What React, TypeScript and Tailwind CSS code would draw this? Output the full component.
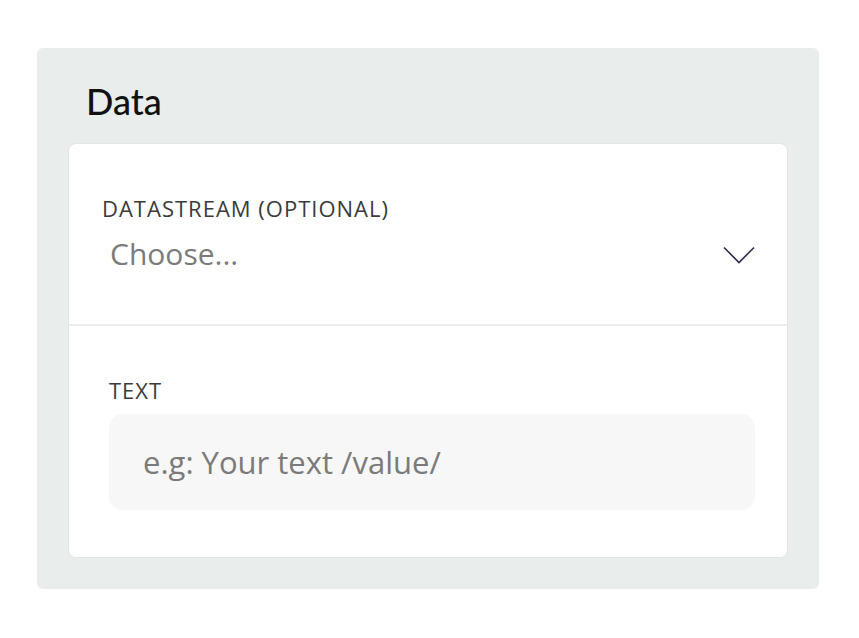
import React from "react";

export default function App() {
  return (
    <div className="w-[859px] h-[638px] bg-white pt-[48px] pl-[37px]">
      <div className="w-[782px] h-[541px] bg-[#e9eeed] rounded-[6px] px-[31px] pb-[31px] flex flex-col">
        <div
          className="pt-[35px] pl-[18px] text-[36px] leading-none font-medium text-[#111111]"
          style={{ fontFamily: "Lato, 'Open Sans', sans-serif" }}
        >
          Data
        </div>
        <div
          className="mt-[24px] flex-1 bg-white rounded-[8px] border border-[#e2e7e6] flex flex-col"
          style={{ fontFamily: "'Open Sans', 'Noto Sans', sans-serif" }}
        >
          <div className="pt-[53px] pb-[55px] px-[33px]">
            <div className="text-[22px] leading-none text-[#3b3b3b] tracking-[1px] uppercase">
              Datastream (optional)
            </div>
            <div className="mt-[20px] flex items-center justify-between">
              <span className="pl-[8px] text-[30px] leading-none text-[#7b7b7b]">
                Choose...
              </span>
              <svg width="32" height="18" viewBox="0 0 32 18" className="mr-[-1px] mt-[1px]">
                <polyline
                  points="1,1.5 16,16.5 31,1.5"
                  fill="none"
                  stroke="#2d2a4f"
                  strokeWidth="1.6"
                />
              </svg>
            </div>
          </div>
          <div className="h-[2px] bg-[#eaeeed]" />
          <div className="pt-[53px] pb-[47px] pl-[40px] pr-[32px]">
            <div className="text-[22px] leading-none text-[#3b3b3b] tracking-[1px] uppercase">
              Text
            </div>
            <div className="mt-[13px] h-[96px] rounded-[14px] bg-[#f7f7f7] flex items-center pl-[34px]">
              <span className="text-[31px] leading-none text-[#7b7b7b]">
                e.g: Your text /value/
              </span>
            </div>
          </div>
        </div>
      </div>
    </div>
  );
}
